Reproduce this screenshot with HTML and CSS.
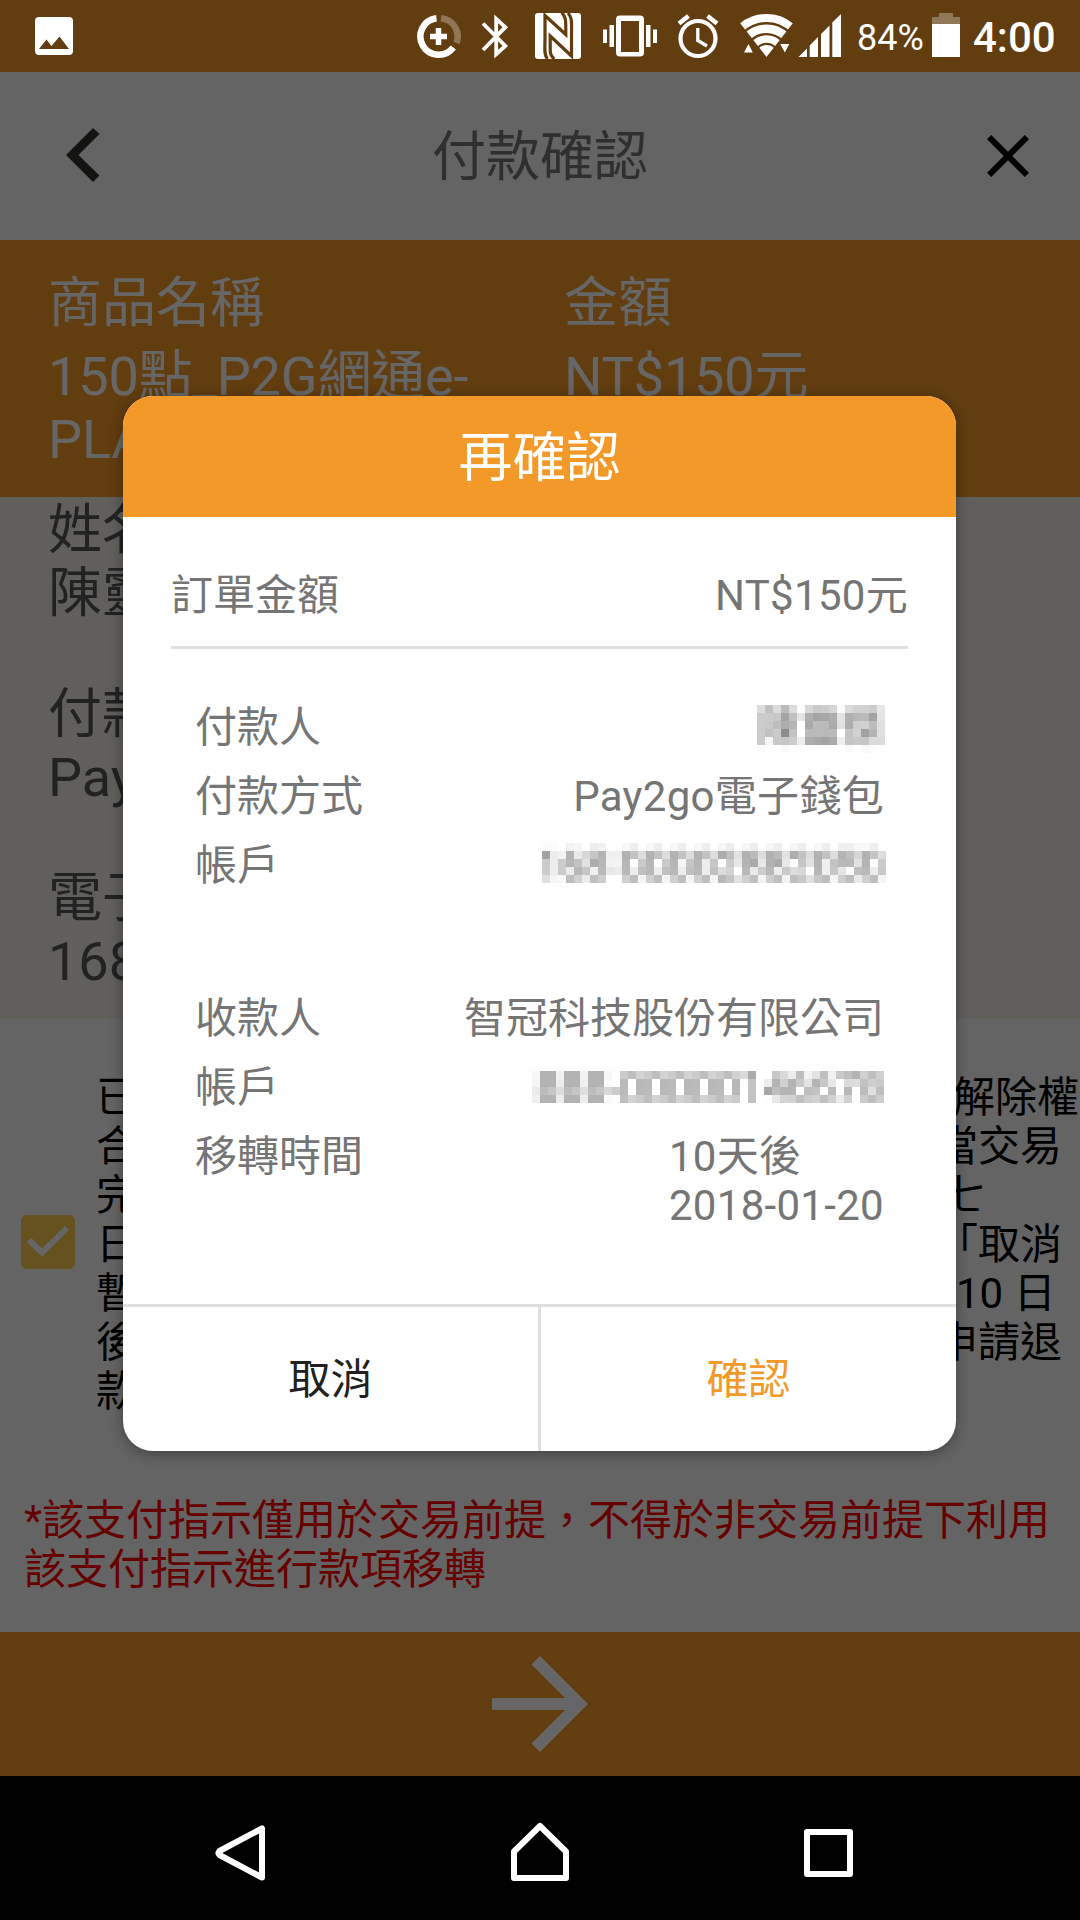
FILE: index.html
```html
<!DOCTYPE html>
<html lang="zh-Hant">
<head>
  <meta charset="UTF-8">
  <meta name="viewport" content="width=device-width, initial-scale=1">
  <title>付款確認</title>
  <link rel="stylesheet" href="styles.css">
</head>
<body>
  <div class="screen">
    <div class="status-bar">
      <svg class="icon-picture" width="38" height="38" viewBox="0 0 38 38">
        <path fill="#fff" fill-rule="evenodd" d="M4 0h30a4 4 0 0 1 4 4v30a4 4 0 0 1-4 4H4a4 4 0 0 1-4-4V4a4 4 0 0 1 4-4zM4 32h30L24.500 19.500l-8 9.500-5-6.500z"/>
      </svg>
      <div class="status-icons">
        <svg class="icon-data" width="46" height="48" viewBox="0 0 46 48">
          <g fill="none" stroke="#fff" stroke-width="6.500">
            <path d="M20.500 6.300A18.300 18.300 0 1 0 37.300 35.500"/>
            <path stroke-opacity=".3" d="M25 6.300A18.300 18.300 0 0 1 40.500 31"/>
            <path stroke-width="5.500" d="M14 24.500h17M22.500 16v17"/>
          </g>
        </svg>
        <svg class="icon-bluetooth" width="28" height="48" viewBox="0 0 28 48">
          <path fill="none" stroke="#fff" stroke-width="3.800" d="M2 11.500 24.300 34 15.200 42.200V6.800L24.300 15.200 2 38"/>
        </svg>
        <svg class="icon-nfc" width="48" height="48" viewBox="0 0 48 48">
          <rect x="1" y="1" width="46" height="46" rx="3" fill="#fff"/>
          <path fill="none" stroke="#613d10" stroke-width="3.200" d="M13.500 47C9.800 43 11 36 11 27V3.500L31.800 22.500V17C31.800 7 31.800 6 28 .5M34 1c4.500 5 3.500 10 3.500 21v22L16.200 24v10c0 8 0 9 4 13"/>
        </svg>
        <svg class="icon-vibrate" width="56" height="48" viewBox="0 0 56 48">
          <path fill="#fff" fill-rule="evenodd" d="M18 3.500h20a4 4 0 0 1 4 4v33a4 4 0 0 1-4 4H18a4 4 0 0 1-4-4v-33a4 4 0 0 1 4-4zm1 5.500v31h18V9zM7.500 13h4.500v22H7.500zM1 17.500h4v13.500H1zM44 13h4.500v22H44zM51 17.500h4v13.500h-4z"/>
        </svg>
        <svg class="icon-alarm" width="44" height="48" viewBox="0 0 44 48">
          <g fill="none" stroke="#fff">
            <circle cx="22" cy="26.500" r="17.500" stroke-width="4.200"/>
            <path stroke-width="4.500" d="M3 11.500 12.500 4M41 11.500 31.500 4"/>
            <path stroke-width="3.300" d="M21.800 16v12.500l9.200 5.500"/>
          </g>
        </svg>
        <svg class="icon-wifi" width="53" height="48" viewBox="0 0 53 48">
          <clipPath id="wifi"><path d="M26.500 45-2 8.500V-5h57V8.500z"/></clipPath>
          <g clip-path="url(#wifi)" fill="none" stroke="#fff">
            <circle cx="26.500" cy="44" r="38" stroke-width="8"/>
            <circle cx="26.500" cy="44" r="27.300" stroke-width="8.500"/>
            <circle cx="26.500" cy="44" r="17" stroke-width="7.500"/>
            <circle cx="26.500" cy="44" r="5.500" stroke-width="11"/>
          </g>
          <path fill="#fff" d="M4 40.500l4.500-8.500 4.300 8.500zM40.300 32h9l-4.500 8.500z"/>
        </svg>
        <svg class="icon-signal" width="44" height="48" viewBox="0 0 44 48">
          <path fill="#fff" d="M.5 45 9 36.500V45zM11.700 33.500 20 25v20h-8.300zM23 22l8.500-8.500V45H23zM34.300 10.500 43 2v43h-8.700z"/>
        </svg>
        <span class="battery-text">84%</span>
        <svg class="icon-battery" width="28" height="48" viewBox="0 0 28 48">
          <path fill="#fff" fill-opacity=".3" d="M0 5h7V1h14v4h7v7H0z"/>
          <path fill="#fff" d="M0 12h28v33H0z"/>
        </svg>
        <span class="clock">4:00</span>
      </div>
    </div>

    <header class="page-header">
      <svg class="back" width="36" height="56" viewBox="0 0 36 56">
        <path fill="#353431" d="M0 27 27 0l6.500 6L12.500 27l21 20.500L27 54z"/>
      </svg>
      <h1>付款確認</h1>
      <svg class="close" width="72" height="72" viewBox="0 0 24 24">
        <path d="M19 6.410 17.590 5 12 10.590 6.410 5 5 6.410 10.590 12 5 17.590 6.410 19 12 13.410 17.590 19 19 17.590 13.410 12z"/>
      </svg>
    </header>

    <section class="product">
      <div class="product-name">
        <p class="label">商品名稱</p>
        <p class="product-value">150點_P2G網通e-<br>PLAY</p>
      </div>
      <div>
        <p class="label">金額</p>
        <p class="product-value">NT$150元</p>
      </div>
    </section>

    <section class="payer">
      <div><p>姓名</p><p>陳靈</p></div>
      <div><p>付款</p><p>Pay</p></div>
      <div><p>電子</p><p>168</p></div>
    </section>

    <section class="terms">
      <svg width="72" height="72" viewBox="0 0 24 24">
        <path fill="#fff" d="M4 4h16v16H4z"/>
        <path fill="#ffcc4e" d="M19 3H5c-1.110 0-2 .9-2 2v14c0 1.100.89 2 2 2h14c1.110 0 2-.9 2-2V5c0-1.100-.89-2-2-2zm-9 14l-5-5 1.410-1.410L10 14.170l7.590-7.590L19 8l-9 9z"/>
      </svg>
      <div class="terms-text">
        <p><span>已</span><span class="shift-first">解除權</span></p>
        <p><span>合</span><span>當交易</span></p>
        <p><span>完</span><span class="shift-small">七</span></p>
        <p><span>日</span><span>「取消</span></p>
        <p><span>暫</span><span class="shift">10 日</span></p>
        <p><span>後</span><span>申請退</span></p>
        <p><span>款</span></p>
      </div>
    </section>

    <p class="warning">*該支付指示僅用於交易前提，不得於非交易前提下利用該支付指示進行款項移轉</p>

    <div class="next">
      <svg width="144" height="144" viewBox="0 0 24 24">
        <path fill="#fff" d="M12 4l-1.410 1.410L16.170 11H4v2h12.170l-5.580 5.590L12 20l8-8z"/>
      </svg>
    </div>

    <nav class="nav-bar">
      <svg width="60" height="72" viewBox="0 0 60 72">
        <path d="M52 13.500v49L9.500 40q-2-2 0-4z"/>
      </svg>
      <svg width="60" height="72" viewBox="0 0 60 72">
        <path d="M4 36.500 30 11l26 25.500V63H4z"/>
      </svg>
      <svg width="60" height="72" viewBox="0 0 60 72">
        <path d="M9 17h43v42H9z"/>
      </svg>
    </nav>

    <div class="overlay">
      <div class="dialog">
        <h2>再確認</h2>
        <div class="amount">
          <span>訂單金額</span>
          <span class="value">NT$150元</span>
        </div>
        <div class="details">
          <div class="row"><span>付款人</span><canvas class="mask-name" id="payer-name"></canvas></div>
          <div class="row"><span>付款方式</span><span class="value">Pay2go電子錢包</span></div>
          <div class="row"><span>帳戶</span><canvas class="mask-payer" id="payer-account"></canvas></div>
          <div class="row payee"><span>收款人</span><span>智冠科技股份有限公司</span></div>
          <div class="row"><span>帳戶</span><canvas class="mask-payee" id="payee-account"></canvas></div>
          <div class="row"><span>移轉時間</span><span class="value">10天後<br>2018-01-20</span></div>
        </div>
        <div class="actions">
          <button type="button">取消</button>
          <button type="button" class="confirm">確認</button>
        </div>
      </div>
    </div>
  </div>

  <script src="mask.js"></script>
</body>
</html>
```

FILE: styles.css
```css
* {
  box-sizing: border-box;
}
body {
  margin: 0;
  font-family: Roboto, "Noto Sans CJK TC", sans-serif;
  font-size: 42px;
  line-height: 49px;
  color: #000;
}
h1, h2, p {
  margin: 0;
  font-weight: normal;
}
svg, canvas {
  display: block;
  flex: none;
}
.screen {
  position: relative;
  width: 1080px;
  height: 1920px;
  overflow: hidden;
  background: #fafafa;
  display: flex;
  flex-direction: column;
}

/* status bar */
.status-bar {
  position: relative;
  z-index: 2;
  flex: none;
  height: 72px;
  padding: 0 25px 0 35px;
  background: #613d10;
  color: #fff;
  display: flex;
  align-items: center;
  justify-content: space-between;
}
.status-icons {
  display: flex;
  align-items: center;
}
.icon-data { margin-right: 19px; }
.icon-bluetooth { margin-right: 25px; }
.icon-nfc { margin-right: 20px; }
.icon-vibrate { margin-right: 18px; }
.icon-alarm { margin-right: 20px; }
.icon-wifi { margin-right: 5px; }
.icon-signal { margin-right: 15px; }
.battery-text {
  width: 75px;
  font-size: 36px;
  padding-top: 4px;
}
.clock {
  width: 95px;
  padding: 2px 0 0 13px;
  font-weight: 500;
}

/* header */
.page-header {
  flex: none;
  height: 168px;
  padding: 0 36px 0 66px;
  display: flex;
  align-items: center;
  justify-content: space-between;
}
.page-header h1 {
  font-size: 54px;
  line-height: 63px;
  color: #757575;
  padding: 3px 0 0 6px;
}

/* order info */
.product {
  flex: none;
  height: 257px;
  padding: 32px 48px 0;
  background: #f39929;
  color: #fff;
  font-size: 54px;
  line-height: 63px;
  display: flex;
}
.product-name {
  width: 516px;
}
.product .label {
  margin-bottom: 10px;
}
.product-value {
  letter-spacing: -0.15px;
}
.payer {
  flex: none;
  height: 522px;
  padding: 2px 48px 0;
  background: #f1eee7;
  color: #555;
  font-size: 54px;
  line-height: 63px;
  display: flex;
  flex-direction: column;
  gap: 58px;
}

/* terms */
.terms {
  flex: none;
  padding: 54px 0 0 12px;
  display: flex;
  align-items: center;
  gap: 12px;
}
.terms svg {
  margin-bottom: 5px;
}
.terms-text {
  flex: 1;
}
.terms-text p {
  display: flex;
  justify-content: space-between;
  white-space: nowrap;
}
.terms-text span + span {
  width: 144px;
}
.terms-text .shift {
  padding-left: 20px;
}
.terms-text .shift-first {
  padding-left: 17px;
}
.terms-text .shift-small {
  padding-left: 7px;
}
.warning {
  flex: 1;
  padding: 80px 24px 0;
  color: #f00;
}
.next {
  flex: none;
  height: 144px;
  background: #f39929;
  display: flex;
  justify-content: center;
}
.nav-bar {
  flex: none;
  position: relative;
  z-index: 2;
  height: 144px;
  padding: 6px 222px 0 210px;
  background: #000;
  display: flex;
  align-items: center;
}
.nav-bar svg:nth-child(2) {
  margin: 0 228px 0 240px;
}
.nav-bar path {
  fill: none;
  stroke: #fff;
  stroke-width: 6px;
  stroke-linejoin: round;
}

/* dialog */
.overlay {
  position: absolute;
  inset: 0;
  padding: 72px 1px 145px 0;
  background: rgba(0, 0, 0, 0.6);
  display: flex;
  align-items: center;
  justify-content: center;
}
.dialog {
  width: 833px;
  height: 1055px;
  border-radius: 30px;
  background: #fff;
  color: #757575;
  overflow: hidden;
  box-shadow: 0 3px 14px rgba(0, 0, 0, 0.35);
  display: flex;
  flex-direction: column;
}
.dialog h2 {
  height: 121px;
  padding-top: 2px;
  background: #f39929;
  color: #fff;
  font-size: 54px;
  line-height: 121px;
  text-align: center;
}
.amount {
  margin: 0 48px;
  padding: 54px 0 26px;
  border-bottom: 3px solid #e0e0e0;
  display: flex;
  justify-content: space-between;
}
.value {
  letter-spacing: 0.3px;
}
.details {
  flex: 1;
  padding: 54px 72px 0;
}
.row {
  height: 69px;
  display: flex;
  align-items: flex-start;
  justify-content: space-between;
  white-space: nowrap;
}
.row.payee {
  height: 153px;
  padding-top: 84px;
}
.mask-name {
  margin: 2px -1px 0 0;
}
.mask-payer {
  margin: 2px -2px 0 0;
}
.mask-payee {
  margin-top: 8px;
}
.actions {
  height: 147px;
  border-top: 3px solid #e0e0e0;
  display: flex;
}
.actions button {
  flex: 1;
  border: none;
  background: none;
  padding: 0;
  font: inherit;
  color: #212121;
}
.actions .confirm {
  color: #f39929;
  border-left: 3px solid #e0e0e0;
}
```

FILE: mask.js
```js
// two hex digits = grey level of one 8px cell
const masks = {
  'payer-name': [
    'ddc1dcbbddfdd8cacdd6fcdcd3d2cce7',
    'cbcbc8a4c0e4b0a5a6aee4b1b8bba3e4',
    'cbc9beadb5ffaabbbbabe0aecfd0bde0',
    'cbc1cb8dc3ffbbbbbabbffc5d2a2b5e0',
    'cbf5c9c7cdeeada9a3abeec5c9c7dcdb',
    'fafffffafffffffffffffffafffafcff'
  ],
  'payer-account': [
    'fcfcfff2f6ffedf1ffff' + 'f8eeff'.repeat(4) + 'f6ecfff6edfff6eefff6eefff8eefff0f0f8f8eeff',
    'a3edf2b3ead8c6b3f0f0' + 'b1c2dd'.repeat(4) + 'adbfe2b1bbddb1bbe2adc2ddb1c2ddb4c0d6b1c5dd',
    'ccedccb5c3e2adb7f3f3b6fdcbb6fdcbb6f5c5b6edc6' + 'ffcce8b4aae8b2aae8ffc6e2b4f0c4b9b8e2b4fdcb',
    'ccedcbebb6c5f0b9e8eb' + 'b8edc0'.repeat(4) + 'dcd4ffb8eaccb8edcadcd8ffb6f0c6e5fbbfb9edc8',
    'dff5f9bed0ecbfceffff' + 'd0bef5'.repeat(4) + 'b8c5e2d0c0f3cebef3bec9e0c8bef5cebeead0bef5'
  ],
  'payee-account': [
    'f8b3b3f2b3b3f3b3b3f8ff' + 'cbbed2'.repeat(5) + 'dbabffffc8d8ecbef3e2bff2cabfb3d0bfd0',
    'f5b3b3ecb3b3efb3b3faff' + 'baffb8'.repeat(5) + 'fdc3ffecb3d0b3c9e4b4c8e8ffdbddc2cfc9',
    'eabcc5dcbcc5debcc5d8cc' + 'baffb8'.repeat(5) + 'ffc3ffa6beb4b5ffbfc3ffbbffb8ffbbe0bf',
    'efb3b3ecb3b3eeb3b3faff' + 'bed2cb'.repeat(5) + 'ffc3fffde8d4d2c0ccd2c0d0eccfffcbbfcd'
  ]
};

Object.keys(masks).forEach(id => {
  const canvas = document.getElementById(id);
  const rows = masks[id];
  canvas.width = rows[0].length / 2 * 8;
  canvas.height = rows.length * 8;
  const ctx = canvas.getContext('2d');
  rows.forEach((row, y) => {
    for (let x = 0; x < row.length / 2; x++) {
      const grey = row.substr(x * 2, 2);
      ctx.fillStyle = '#' + grey + grey + grey;
      ctx.fillRect(x * 8, y * 8, 8, 8);
    }
  });
});
```
